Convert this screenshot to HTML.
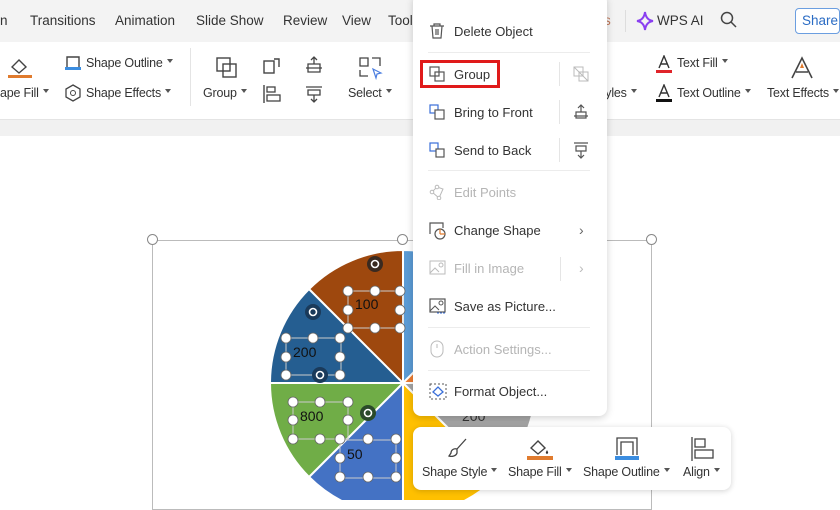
<!DOCTYPE html>
<html><head><meta charset="utf-8"><style>
*{margin:0;padding:0;box-sizing:border-box}
body{width:840px;height:500px;overflow:hidden;background:#fff;font-family:"Liberation Sans",sans-serif;color:#333;position:relative}
.a{position:absolute;white-space:nowrap}
.t{font-size:13.5px;color:#333}
.m{font-size:13px;color:#333}
.s{font-size:12.5px;color:#333;letter-spacing:-0.2px}
.g{color:#b5b5b5}
.c::after{content:"";display:inline-block;margin-left:4px;border:3px solid transparent;border-top:4px solid #555;vertical-align:1px}
.sep{position:absolute;left:428px;width:162px;height:1px;background:#ececec}
</style></head><body>
<div class="a" style="left:0;top:0;width:840px;height:42px;background:#f3f3f3"></div>
<div class="a" style="left:0;top:42px;width:840px;height:78px;background:#fff;border-bottom:1px solid #e4e4e4"></div>
<div class="a" style="left:0;top:120px;width:840px;height:16px;background:#f1f1f1"></div>
<div class="a" style="left:0;top:136px;width:840px;height:364px;background:#fff"></div>
<div class="a t" style="left:0;top:13px">n</div>
<div class="a t" style="left:30px;top:13px">Transitions</div>
<div class="a t" style="left:115px;top:13px">Animation</div>
<div class="a t" style="left:196px;top:13px">Slide Show</div>
<div class="a t" style="left:283px;top:13px">Review</div>
<div class="a t" style="left:342px;top:13px">View</div>
<div class="a t" style="left:388px;top:13px">Tool</div>
<div class="a t" style="left:604px;top:13px;color:#c0785a">s</div>
<div class="a" style="left:625px;top:10px;width:1px;height:22px;background:#ddd"></div>
<svg class="a" style="left:636px;top:11px" width="18" height="20"><path d="M9 1 Q10 9 17 10 Q10 11 9 19 Q8 11 1 10 Q8 9 9 1Z" fill="none" stroke="#8a3ff0" stroke-width="2"/></svg>
<div class="a t" style="left:657px;top:13px">WPS AI</div>
<svg class="a" style="left:720px;top:11px" width="18" height="18"><circle cx="7" cy="7" r="5.5" fill="none" stroke="#444" stroke-width="1.5"/><path d="M11 11l5 5" stroke="#444" stroke-width="1.5"/></svg>
<div class="a" style="left:795px;top:8px;width:45px;height:26px;border:1px solid #6b9ee0;border-radius:4px;background:#fff"></div>
<div class="a t" style="left:802px;top:13px;color:#2b6cc4">Share</div>
<!-- ribbon -->
<svg class="a" style="left:8px;top:55px" width="26" height="26"><path d="M4 12l7-7 7 7-7 6z" fill="none" stroke="#444" stroke-width="1.4"/><rect x="0" y="20" width="24" height="3" fill="#e07b2e"/></svg>
<div class="a s c" style="left:0;top:86px">ape Fill</div>
<svg class="a" style="left:64px;top:55px" width="18" height="18"><path d="M3 12V2h12v10" fill="none" stroke="#444" stroke-width="1.4"/><rect x="1" y="12" width="16" height="3" fill="#3b8de0"/></svg>
<div class="a s c" style="left:86px;top:56px">Shape Outline</div>
<svg class="a" style="left:64px;top:84px" width="18" height="18"><path d="M9 1l7 4v8l-7 4-7-4V5z" fill="none" stroke="#444" stroke-width="1.3"/><circle cx="9" cy="9" r="2.5" fill="none" stroke="#444"/></svg>
<div class="a s c" style="left:86px;top:86px">Shape Effects</div>
<div class="a" style="left:190px;top:48px;width:1px;height:58px;background:#e4e4e4"></div>
<svg class="a" style="left:215px;top:56px" width="24" height="24"><rect x="2" y="2" width="13" height="13" fill="none" stroke="#444" stroke-width="1.4"/><rect x="8" y="8" width="13" height="13" fill="none" stroke="#444" stroke-width="1.4"/></svg>
<div class="a s c" style="left:203px;top:86px">Group</div>
<svg class="a" style="left:262px;top:56px" width="20" height="20"><rect x="2" y="5" width="10" height="12" fill="none" stroke="#444" stroke-width="1.4"/><path d="M12 3h5v8" fill="none" stroke="#444" stroke-width="1.4"/></svg>
<svg class="a" style="left:262px;top:84px" width="20" height="20"><path d="M2 1v18" stroke="#444" stroke-width="1.4"/><rect x="5" y="3" width="8" height="5" fill="none" stroke="#444" stroke-width="1.3"/><rect x="5" y="11" width="13" height="6" fill="none" stroke="#444" stroke-width="1.3"/></svg>
<svg class="a" style="left:304px;top:55px" width="20" height="20"><path d="M2 13h16M4 9h12v8H4zM10 9V2M7 5l3-3 3 3" fill="none" stroke="#444" stroke-width="1.3"/></svg>
<svg class="a" style="left:304px;top:84px" width="20" height="20"><path d="M2 3h16M4 6h12v5H4zM10 11v7M7 15l3 3 3-3" fill="none" stroke="#444" stroke-width="1.3"/></svg>
<svg class="a" style="left:358px;top:56px" width="26" height="24"><path d="M2 2h8v8H2zM14 2h8v8M2 14v6h8" fill="none" stroke="#444" stroke-width="1.3"/><path d="M15 13l8 4-4 1-1 4z" fill="none" stroke="#4a7de0" stroke-width="1.2"/></svg>
<div class="a s c" style="left:348px;top:86px">Select</div>
<div class="a s c" style="left:602px;top:86px">tyles</div>
<svg class="a" style="left:655px;top:55px" width="18" height="20"><path d="M4 13l5-12 5 12M6 9h6" fill="none" stroke="#333" stroke-width="1.4"/><rect x="1" y="15" width="16" height="3" fill="#e0242a"/></svg>
<div class="a s c" style="left:677px;top:56px">Text Fill</div>
<svg class="a" style="left:655px;top:84px" width="18" height="20"><path d="M4 13l5-12 5 12M6 9h6" fill="none" stroke="#333" stroke-width="1.4"/><rect x="1" y="15" width="16" height="3" fill="#111"/></svg>
<div class="a s c" style="left:677px;top:86px">Text Outline</div>
<svg class="a" style="left:790px;top:56px" width="24" height="24"><path d="M2 22L12 2l10 20M6 16h12" fill="none" stroke="#444" stroke-width="1.6"/><path d="M10 12l2-5 2 5z" fill="#e07b2e"/></svg>
<div class="a s c" style="left:767px;top:86px">Text Effects</div>
<!-- selection box -->
<div class="a" style="left:152px;top:240px;width:500px;height:270px;border:1px solid #bbb"></div>
<div class="a" style="left:147px;top:234px;width:11px;height:11px;border-radius:50%;border:1.5px solid #888;background:#fff"></div>
<div class="a" style="left:397px;top:234px;width:11px;height:11px;border-radius:50%;border:1.5px solid #888;background:#fff"></div>
<div class="a" style="left:646px;top:234px;width:11px;height:11px;border-radius:50%;border:1.5px solid #888;background:#fff"></div>
<!-- pie -->
<svg class="a" style="left:0;top:0" width="840" height="500">
<g stroke="#fff" stroke-width="2">
<path d="M403 383L403 250A133 133 0 0 1 497 289Z" fill="#5b9bd5"/>
<path d="M403 383L497 289A133 133 0 0 1 536 383Z" fill="#ed7d31"/>
<path d="M403 383L536 383A133 133 0 0 1 497 477Z" fill="#a5a5a5"/>
<path d="M403 383L497 477A133 133 0 0 1 403 516Z" fill="#ffc000"/>
<path d="M403 383L403 516A133 133 0 0 1 309 477Z" fill="#4472c4"/>
<path d="M403 383L309 477A133 133 0 0 1 270 383Z" fill="#70ad47"/>
<path d="M403 383L270 383A133 133 0 0 1 309 289Z" fill="#255e91"/>
<path d="M403 383L309 289A133 133 0 0 1 403 250Z" fill="#9e480e"/>
</g>
<g stroke="#ccc" fill="none" stroke-width="1"><rect x="348" y="291" width="55" height="37"/><rect x="286" y="338" width="55" height="37"/><rect x="293" y="402" width="55" height="37"/><rect x="340" y="440" width="56" height="38"/></g>
<g fill="#fff" stroke="#666" stroke-width="0.8">
<circle cx="348" cy="291" r="5"/><circle cx="375" cy="291" r="5"/><circle cx="400" cy="291" r="5"/><circle cx="348" cy="310" r="5"/><circle cx="400" cy="310" r="5"/><circle cx="348" cy="328" r="5"/><circle cx="375" cy="328" r="5"/><circle cx="400" cy="328" r="5"/>
<circle cx="286" cy="338" r="5"/><circle cx="313" cy="338" r="5"/><circle cx="340" cy="338" r="5"/><circle cx="286" cy="357" r="5"/><circle cx="340" cy="357" r="5"/><circle cx="286" cy="375" r="5"/><circle cx="340" cy="375" r="5"/>
<circle cx="293" cy="402" r="5"/><circle cx="320" cy="402" r="5"/><circle cx="348" cy="402" r="5"/><circle cx="293" cy="420" r="5"/><circle cx="348" cy="420" r="5"/><circle cx="293" cy="439" r="5"/><circle cx="320" cy="439" r="5"/><circle cx="340" cy="439" r="5"/><circle cx="368" cy="439" r="5"/><circle cx="396" cy="439" r="5"/>
<circle cx="340" cy="458" r="5"/><circle cx="396" cy="458" r="5"/><circle cx="340" cy="477" r="5"/><circle cx="368" cy="477" r="5"/><circle cx="396" cy="477" r="5"/>
</g>
<g><circle cx="375" cy="264" r="8" fill="#3a2a20"/><circle cx="313" cy="312" r="8" fill="#1a3a5a"/><circle cx="320" cy="375" r="8" fill="#1a3a5a"/><circle cx="368" cy="413" r="8" fill="#2a4a2a"/></g>
<g fill="none" stroke="#fff" stroke-width="1.6"><circle cx="375" cy="264" r="3.5"/><circle cx="313" cy="312" r="3.5"/><circle cx="320" cy="375" r="3.5"/><circle cx="368" cy="413" r="3.5"/></g>
<g font-family="Liberation Sans" font-size="14" fill="#111"><text x="355" y="309">100</text><text x="293" y="357">200</text><text x="300" y="421">800</text><text x="347" y="459">50</text><text x="462" y="421" fill="#333">200</text></g>
</svg>
<!-- context menu -->
<div class="a" style="left:413px;top:-6px;width:194px;height:422px;background:#fff;border-radius:8px;box-shadow:0 2px 8px rgba(0,0,0,.18)"></div>
<svg class="a" style="left:429px;top:23px" width="16" height="16"><path d="M1 3h14M5 3V1h6v2M3 3l1 12h8l1-12M7 6v6M9 6v6" fill="none" stroke="#555" stroke-width="1.2"/></svg>
<div class="a m" style="left:454px;top:24px">Delete Object</div>
<div class="sep" style="top:52px"></div>
<div class="a" style="left:420px;top:60px;width:80px;height:28px;border:3px solid #e01a1a"></div>
<svg class="a" style="left:429px;top:66px" width="16" height="16"><rect x="1" y="1" width="9" height="9" fill="none" stroke="#555" stroke-width="1.2"/><rect x="6" y="6" width="9" height="9" fill="none" stroke="#555" stroke-width="1.2"/></svg>
<div class="a m" style="left:454px;top:67px">Group</div>
<div class="a" style="left:559px;top:62px;width:1px;height:24px;background:#e5e5e5"></div>
<svg class="a" style="left:573px;top:66px" width="16" height="16"><rect x="1" y="1" width="9" height="9" fill="none" stroke="#bbb"/><rect x="6" y="6" width="9" height="9" fill="none" stroke="#bbb"/><path d="M1 1l14 14" stroke="#bbb"/></svg>
<svg class="a" style="left:429px;top:104px" width="16" height="16"><rect x="1" y="1" width="8" height="8" fill="none" stroke="#3a6fd8" stroke-width="1.2"/><rect x="6" y="6" width="9" height="9" fill="#fff" stroke="#555" stroke-width="1.2"/></svg>
<div class="a m" style="left:454px;top:105px">Bring to Front</div>
<div class="a" style="left:559px;top:100px;width:1px;height:24px;background:#e5e5e5"></div>
<svg class="a" style="left:572px;top:103px" width="18" height="18"><path d="M2 13h14M4 9h10v6H4zM9 9V2M6 5l3-3 3 3" fill="none" stroke="#555" stroke-width="1.2"/></svg>
<svg class="a" style="left:429px;top:142px" width="16" height="16"><rect x="1" y="1" width="8" height="8" fill="none" stroke="#3a6fd8" stroke-width="1.2"/><rect x="7" y="7" width="8" height="8" fill="#fff" stroke="#555" stroke-width="1.2"/></svg>
<div class="a m" style="left:454px;top:143px">Send to Back</div>
<div class="a" style="left:559px;top:138px;width:1px;height:24px;background:#e5e5e5"></div>
<svg class="a" style="left:572px;top:141px" width="18" height="18"><path d="M2 2h14M4 5h10v5H4zM9 10v7M6 14l3 3 3-3" fill="none" stroke="#555" stroke-width="1.2"/></svg>
<div class="sep" style="top:170px"></div>
<svg class="a" style="left:429px;top:184px" width="16" height="16"><path d="M3 8l5-5 6 2-4 9z" fill="none" stroke="#bbb"/><circle cx="3" cy="8" r="1.8" fill="#fff" stroke="#bbb"/><circle cx="8" cy="3" r="1.8" fill="#fff" stroke="#bbb"/><circle cx="10" cy="14" r="1.8" fill="#fff" stroke="#bbb"/></svg>
<div class="a m g" style="left:454px;top:185px">Edit Points</div>
<svg class="a" style="left:429px;top:222px" width="18" height="18"><path d="M1 12V1h13v5" fill="none" stroke="#555" stroke-width="1.2"/><circle cx="11" cy="12" r="5" fill="#fff" stroke="#555" stroke-width="1.2"/><path d="M11 12V7M11 12h5" stroke="#e07b2e" stroke-width="1.2"/></svg>
<div class="a m" style="left:454px;top:223px">Change Shape</div>
<div class="a" style="left:579px;top:222px;font-size:14px;color:#666">&#x203A;</div>
<svg class="a" style="left:429px;top:260px" width="17" height="16"><rect x="1" y="1" width="15" height="13" fill="none" stroke="#bbb"/><path d="M1 13l5-5 4 4" fill="none" stroke="#bbb"/><circle cx="12" cy="5" r="2" fill="none" stroke="#bbb"/></svg>
<div class="a m g" style="left:454px;top:261px">Fill in Image</div>
<div class="a" style="left:560px;top:257px;width:1px;height:24px;background:#e5e5e5"></div>
<div class="a" style="left:579px;top:260px;font-size:14px;color:#bbb">&#x203A;</div>
<svg class="a" style="left:429px;top:298px" width="17" height="16"><rect x="1" y="1" width="15" height="13" fill="none" stroke="#555" stroke-width="1.2"/><path d="M1 13l5-5 4 4" fill="none" stroke="#555"/><circle cx="12" cy="5" r="2" fill="none" stroke="#555"/><path d="M8 15h8" stroke="#3a6fd8" stroke-dasharray="2 1"/></svg>
<div class="a m" style="left:454px;top:299px">Save as Picture...</div>
<div class="sep" style="top:327px"></div>
<svg class="a" style="left:430px;top:340px" width="14" height="18"><rect x="1" y="1" width="12" height="16" rx="6" fill="none" stroke="#bbb"/><path d="M7 4v4" stroke="#bbb"/></svg>
<div class="a m g" style="left:454px;top:342px">Action Settings...</div>
<div class="sep" style="top:370px"></div>
<svg class="a" style="left:429px;top:383px" width="18" height="17"><rect x="1" y="1" width="16" height="15" fill="none" stroke="#555" stroke-dasharray="2 2"/><path d="M4 9l5-5 5 5-5 4z" fill="none" stroke="#3a6fd8" stroke-width="1.3"/></svg>
<div class="a m" style="left:454px;top:384px">Format Object...</div>
<!-- bottom toolbar -->
<div class="a" style="left:413px;top:427px;width:318px;height:63px;background:#fff;border-radius:8px;box-shadow:0 1px 6px rgba(0,0,0,.18)"></div>
<svg class="a" style="left:446px;top:436px" width="24" height="24"><path d="M20 3l-9 10M11 13c-3-1-6 1-6 4l-2 3c3 1 7 0 8-3z" fill="none" stroke="#444" stroke-width="1.3"/></svg>
<div class="a s c" style="left:422px;top:465px">Shape Style</div>
<svg class="a" style="left:526px;top:436px" width="28" height="26"><path d="M5 12l7-7 7 7-7 6z" fill="none" stroke="#444" stroke-width="1.4"/><path d="M21 14c1 2 2 3 0 4-2-1-1-2 0-4z" fill="#333"/><rect x="1" y="20" width="26" height="4" fill="#e07b2e"/></svg>
<div class="a s c" style="left:508px;top:465px">Shape Fill</div>
<svg class="a" style="left:614px;top:436px" width="26" height="26"><path d="M3 19V2h20v17M7 19V6h12v13" fill="none" stroke="#444" stroke-width="1.3"/><rect x="1" y="20" width="24" height="4" fill="#3b8de0"/></svg>
<div class="a s c" style="left:583px;top:465px">Shape Outline</div>
<svg class="a" style="left:690px;top:436px" width="26" height="26"><path d="M2 1v24" stroke="#444" stroke-width="1.3"/><rect x="5" y="3" width="10" height="8" fill="none" stroke="#444" stroke-width="1.3"/><rect x="5" y="14" width="18" height="8" fill="none" stroke="#444" stroke-width="1.3"/></svg>
<div class="a s c" style="left:683px;top:465px">Align</div>
</body></html>
